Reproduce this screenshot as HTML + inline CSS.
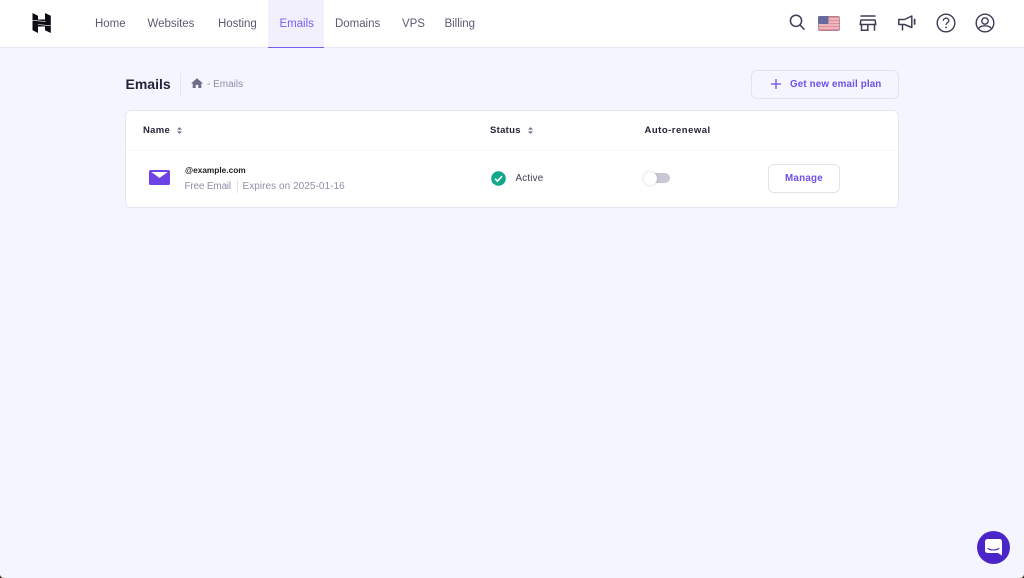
<!DOCTYPE html>
<html><head><meta charset="utf-8"><style>
*{box-sizing:border-box}
html,body{margin:0;padding:0;width:1024px;height:578px;overflow:hidden;background:#f4f5ff;font-family:"Liberation Sans",sans-serif}
.a{position:absolute;white-space:nowrap}
#hd{left:0;top:0;width:1024px;height:48px;background:#fff;border-bottom:1px solid #e9e9f4}
.n{top:16.500px;font-size:11.500px;line-height:14px;color:#5c5a72;letter-spacing:-.03px}
.th{top:124.500px;font-size:9.500px;line-height:12px;font-weight:bold;color:#26243a;letter-spacing:.3px}
.g{font-size:10px;line-height:12px;color:#8f8fa6;letter-spacing:0}
svg{position:absolute;overflow:visible}
</style></head><body>
<div class="a" id="hd"></div>
<svg style="left:32px;top:13px" width="20" height="20" viewBox="0 0 20 20"><path d="M.5 0L6 2.800V6.500H13V0L18.800 2.800V20L13 17.200V13.500H6V20L.5 17.200Z" fill="#0c0c14"/><path d="M.5 7.300L6 7.800L13.500 8.600M5.800 11.500L13 12.200L18.800 12.800" fill="none" stroke="#fff" stroke-width=".6"/></svg>
<div class="a n" style="left:95px">Home</div>
<div class="a n" style="left:147.500px">Websites</div>
<div class="a n" style="left:218px">Hosting</div>
<div class="a" style="left:268px;top:0;width:56px;height:48px;background:#f3f0fe;border-bottom:1.500px solid #7c5cf0"></div>
<div class="a n" style="left:279.500px;color:#7a5cf0">Emails</div>
<div class="a n" style="left:335px">Domains</div>
<div class="a n" style="left:402px">VPS</div>
<div class="a n" style="left:444.500px">Billing</div>
<svg style="left:789px;top:14px" width="16" height="16" viewBox="0 0 16 16" fill="none" stroke="#3e3c55" stroke-width="1.500"><circle cx="7" cy="6.800" r="5.600"/><path d="M11 11l4 4.200" stroke-linecap="round"/></svg>
<svg style="left:818px;top:15.500px" width="22" height="15" viewBox="0 0 22 15"><rect width="22" height="15" rx="2" fill="#e3909a"/><path d="M0 3H22M0 6H22M0 9H22M0 12H22" stroke="#f2cdd2" stroke-width="1.300"/><rect width="10.500" height="8" rx="1.500" fill="#666a9c"/><rect x=".4" y=".4" width="21.200" height="14.200" rx="2" fill="none" stroke="#6f6f8c" stroke-opacity=".6" stroke-width=".8"/></svg>
<svg style="left:859px;top:15px" width="18" height="16" viewBox="0 0 18 16" fill="none" stroke="#3e3c55" stroke-width="1.500"><path d="M1.500 1H16.500"/><path d="M2 5H16L16.800 9.500H1.200Z" stroke-linejoin="round"/><path d="M2.500 9.500V15.300H8.800V10M15.500 9.500V15.800"/></svg>
<svg style="left:898px;top:15px" width="19" height="16" viewBox="0 0 19 16" fill="none" stroke="#3e3c55" stroke-width="1.500"><path d="M.8 4.500H6.500L13.800 1V12.500L6.500 9.500H.8ZM4.500 9.500V15.500" stroke-linejoin="round"/><path d="M16.600 4.500V9" stroke-width="1.800" stroke-linecap="round"/></svg>
<svg style="left:936px;top:13px" width="20" height="20" viewBox="0 0 20 20" fill="none" stroke="#3e3c55" stroke-width="1.400"><circle cx="10" cy="10" r="8.800"/><path d="M7.300 7.800C7.300 6 8.600 5.200 10 5.200S12.800 6.200 12.800 7.800C12.800 9.800 10 9.800 10 12" stroke-width="1.300"/><circle cx="10" cy="14.500" r=".9" fill="#3e3c55" stroke="none"/></svg>
<svg style="left:975px;top:13px" width="20" height="20" viewBox="0 0 20 20" fill="none" stroke="#3e3c55" stroke-width="1.400"><circle cx="10" cy="10" r="8.800"/><circle cx="10" cy="8" r="3.200"/><path d="M3.800 15.500C5 13 7.500 12.800 10 12.800S15 13 16.200 15.500"/></svg>

<div class="a" style="left:125.500px;top:75.500px;font-size:14px;line-height:17px;font-weight:bold;color:#26243a;letter-spacing:0">Emails</div>
<div class="a" style="left:180px;top:73px;width:1px;height:23px;background:#e6e6f1"></div>
<svg style="left:191px;top:78px" width="12" height="11" viewBox="0 0 12 11"><path d="M6 .2L12 5.500H10.300V10H7.300V6.900H4.700V10H1.700V5.500H0Z" fill="#6c6c86"/></svg>
<div class="a g" style="left:207px;top:78.500px">- Emails</div>

<div class="a" style="left:751px;top:70px;width:148px;height:29px;border:1px solid #e3e3f0;border-radius:6px;background:#f4f5ff"></div>
<svg style="left:771px;top:79px" width="10" height="10" viewBox="0 0 10 10"><path d="M5 0V10M0 5H10" stroke="#6f4fe8" stroke-width="1.300"/></svg>
<div class="a" style="left:790px;top:78.500px;font-size:9.800px;line-height:12px;font-weight:bold;color:#6f4fe8;letter-spacing:.15px">Get new email plan</div>

<div class="a" style="left:125px;top:110px;width:774px;height:97.500px;background:#fff;border:1px solid #e6e6f1;border-radius:6px"></div>
<div class="a" style="left:126px;top:150px;width:772px;height:1px;background:#f6f6fb"></div>
<div class="a th" style="left:143px">Name</div>
<svg style="left:176.500px;top:127px" width="5" height="7" viewBox="0 0 6 8" fill="#6c6c86"><path d="M3 0L6 3H0ZM3 8L0 5H6Z"/></svg>
<div class="a th" style="left:490px">Status</div>
<svg style="left:527.500px;top:127px" width="5" height="7" viewBox="0 0 6 8" fill="#6c6c86"><path d="M3 0L6 3H0ZM3 8L0 5H6Z"/></svg>
<div class="a th" style="left:644.500px;letter-spacing:.5px">Auto-renewal</div>

<svg style="left:149px;top:170px" width="21" height="15" viewBox="0 0 21 15"><rect width="21" height="15" rx="1.800" fill="#6d43e6"/><path d="M2.300 2H18.700L10.500 8Z" fill="#fff"/></svg>
<div class="a" style="left:185px;top:164.500px;font-size:8.300px;line-height:11px;font-weight:bold;color:#1d1e20;letter-spacing:0">@example.com</div>
<div class="a g" style="left:184.500px;top:180.500px;letter-spacing:-.2px">Free Email</div>
<div class="a" style="left:236.500px;top:180px;width:1px;height:13px;background:#e3e3ee"></div>
<div class="a g" style="left:242.500px;top:180.500px;letter-spacing:.05px">Expires on 2025-01-16</div>

<svg style="left:491px;top:171px" width="15" height="15" viewBox="0 0 15 15"><circle cx="7.500" cy="7.500" r="7.300" fill="#0fa888"/><path d="M4 7.800L6.500 10.200L11 5.200" fill="none" stroke="#fff" stroke-width="1.700"/></svg>
<div class="a" style="left:515.500px;top:172.500px;font-size:9.800px;line-height:12px;color:#3f3e52;letter-spacing:.2px">Active</div>

<div class="a" style="left:648px;top:173px;width:22px;height:10px;border-radius:5px;background:#c9c9d6"></div>
<div class="a" style="left:644px;top:172px;width:13px;height:13px;border-radius:50%;background:#fff;box-shadow:0 0 3px rgba(40,40,70,.22)"></div>

<div class="a" style="left:768px;top:163.500px;width:72px;height:29.500px;border:1px solid #e3e3ec;border-radius:6px;background:#fff"></div>
<div class="a" style="left:768px;top:172.500px;width:72px;text-align:center;font-size:9.800px;line-height:12px;font-weight:bold;color:#6f4fe8;letter-spacing:.25px">Manage</div>

<div class="a" style="left:977px;top:531px;width:33px;height:33px;border-radius:50%;background:#4a26c9"></div>
<svg style="left:985px;top:539px" width="17" height="17" viewBox="0 0 17 17"><path d="M2.500 0H14.500A2.500 2.500 0 0 1 17 2.500V16.500L13 14H2.500A2.500 2.500 0 0 1 0 11.500V2.500A2.500 2.500 0 0 1 2.500 0Z" fill="#fff"/><path d="M3 9.500C6 11.500 11 11.500 14 9.500" fill="none" stroke="#4a26c9" stroke-width="1.100" stroke-linecap="round"/></svg>

<svg style="left:0;top:574px" width="4" height="4" viewBox="0 0 6 6"><path d="M0 0C0 3.500 2.500 6 6 6H0Z" fill="#3a2a1e"/></svg>
<svg style="left:1020px;top:574px" width="4" height="4" viewBox="0 0 6 6"><path d="M6 0C6 3.500 3.500 6 0 6H6Z" fill="#3a2a1e"/></svg>
</body></html>
